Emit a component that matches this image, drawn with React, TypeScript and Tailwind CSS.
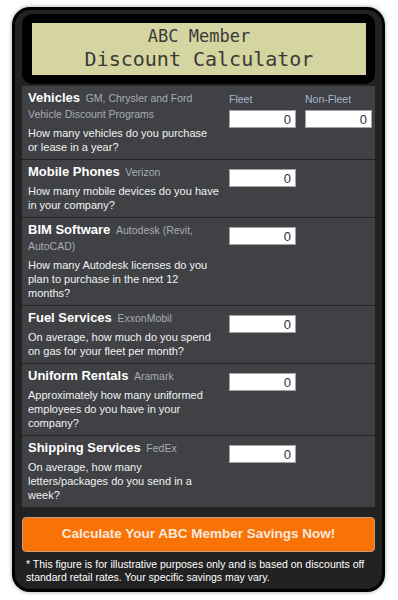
import React from 'react';

interface RowData {
  title: string;
  vendor: string;
  question: string;
  fleet?: boolean;
}

const rows: RowData[] = [
  {
    title: 'Vehicles',
    vendor: 'GM, Chrysler and Ford Vehicle Discount Programs',
    question: 'How many vehicles do you purchase or lease in a year?',
    fleet: true,
  },
  { title: 'Mobile Phones', vendor: 'Verizon', question: 'How many mobile devices do you have in your company?' },
  {
    title: 'BIM Software',
    vendor: 'Autodesk (Revit, AutoCAD)',
    question: 'How many Autodesk licenses do you plan to purchase in the next 12 months?',
  },
  { title: 'Fuel Services', vendor: 'ExxonMobil', question: 'On average, how much do you spend on gas for your fleet per month?' },
  {
    title: 'Uniform Rentals',
    vendor: 'Aramark',
    question: 'Approximately how many uniformed employees do you have in your company?',
  },
  {
    title: 'Shipping Services',
    vendor: 'FedEx',
    question: 'On average, how many letters/packages do you send in a week?',
  },
];

const NumberBox: React.FC = () => (
  <input
    type="text"
    defaultValue="0"
    className="block w-[67px] h-[18px] bg-white border border-[#a3a3a3] text-right pr-[4px] text-[13px] leading-[16px] text-[#2d2d45] outline-none font-['Liberation_Sans',Arial,sans-serif]"
  />
);

const CalcRow: React.FC<{ row: RowData }> = ({ row }) => (
  <div className="flex bg-[#3f4145] pl-[6px] pt-[4px] pb-[5px]">
    <div className="w-[191px] shrink-0">
      <div className="text-[13px] leading-[16px]">
        <span className="font-bold text-white">{row.title}</span>{' '}
        <span className="ml-[2px] text-[10.5px] leading-none text-[#a9acb1]">{row.vendor}</span>
      </div>
      <p className="mt-[4px] text-[11px] leading-[14px] text-[#f2f2f2]">{row.question}</p>
    </div>
    <div className={row.fleet ? 'ml-[10px]' : 'ml-[10px] pt-[5px]'}>
      {row.fleet && (
        <div className="flex gap-[9px] h-[20px] pt-[2px] text-[10.5px] leading-[14px] text-[#a6b8cb]">
          <span className="w-[67px]">Fleet</span>
          <span className="w-[67px]">Non-Fleet</span>
        </div>
      )}
      <div className="flex gap-[9px]">
        <NumberBox />
        {row.fleet && <NumberBox />}
      </div>
    </div>
  </div>
);

export default function App() {
  return (
    <div className="w-[398px] h-[600px] bg-white pt-[7px] pl-[12px] font-['Liberation_Sans',Arial,sans-serif]">
      <div className="w-[373px] border-[3px] border-black rounded-[18px] bg-[#222222] px-[7px] pt-[4px] pb-[5px] shadow-[0_0_4px_rgba(0,0,0,0.35)]">
        {/* LCD header */}
        <div className="bg-black rounded-[10px] pl-[10px] pr-[9px] py-[9px]">
          <div className="h-[52px] bg-[#d5d5a1] flex flex-col items-center justify-center text-[#3a3a35] font-['DejaVu_Sans_Mono','Liberation_Mono',monospace]">
            <div className="text-[17px] leading-[20px]">ABC Member</div>
            <div className="text-[20px] leading-[26px]">Discount Calculator</div>
          </div>
        </div>

        {/* Rows */}
        <div className="mt-[2px] flex flex-col gap-px">
          {rows.map((row) => (
            <CalcRow key={row.title} row={row} />
          ))}
        </div>

        <button className="mt-[10px] w-full h-[35px] rounded-[4px] border border-[#c99c7c] bg-[#f87206] text-[13.5px] font-bold text-[#fbe9de]">
          Calculate Your ABC Member Savings Now!
        </button>

        <p className="mt-[6px] px-[4px] text-[10.5px] leading-[13px] text-white">
          * This figure is for illustrative purposes only and is based on discounts off standard retail rates. Your
          specific savings may vary.
        </p>
      </div>
    </div>
  );
}
